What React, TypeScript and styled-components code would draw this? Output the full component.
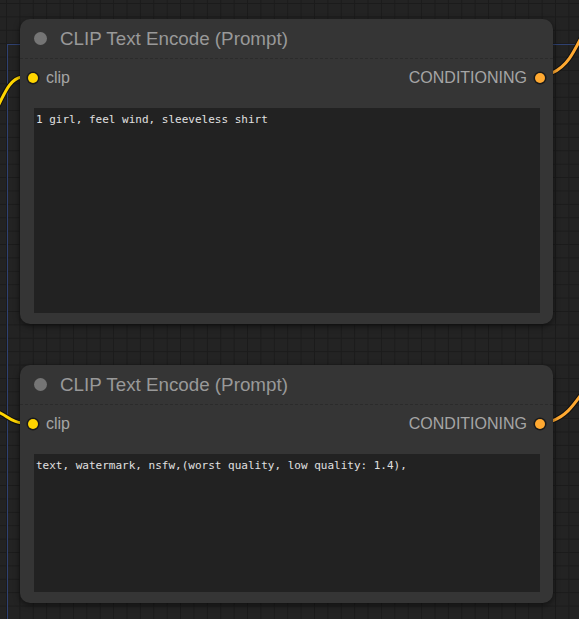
import React from "react";
import styled, { createGlobalStyle } from "styled-components";

const Global = createGlobalStyle`
  html, body { margin: 0; padding: 0; background: #202020; }
  body { font-family: "Liberation Sans", Arial, sans-serif; }
`;

const Canvas = styled.div`
  position: relative;
  width: 579px;
  height: 619px;
  overflow: hidden;
  background-color: #232323;
  background-image:
    linear-gradient(to right, #1b1b1b 1px, transparent 1px),
    linear-gradient(to bottom, #1b1b1b 1px, transparent 1px);
  background-size: 13.4px 13.4px;
  background-position: 6px 3px;
  display: flex;
  flex-direction: column;
  gap: 41px;
  padding: 19px 26px 0 20px;
  box-sizing: border-box;
`;

const Group = styled.div`
  position: absolute;
  left: 7px;
  top: 44px;
  width: 700px;
  height: 700px;
  border-left: 1px solid #2f4170;
  border-top: 1px solid #2f4170;
  pointer-events: none;
`;

const Wires = styled.svg`
  position: absolute;
  left: 0;
  top: 0;
  pointer-events: none;
`;

const Node = styled.div<{ $h: number }>`
  position: relative;
  z-index: 1;
  width: 533px;
  height: ${(p) => p.$h}px;
  background: #353535;
  border-radius: 10px;
  box-shadow: 0 2px 6px rgba(0, 0, 0, 0.55);
  display: flex;
  flex-direction: column;
  box-sizing: border-box;
  padding-bottom: 11px;
`;

const Title = styled.div`
  height: 40px;
  display: flex;
  align-items: center;
  gap: 13px;
  padding-left: 14px;
  border-bottom: 1px dashed #2b2b2b;
  box-sizing: border-box;
  color: #999;
  font-size: 18.8px;
`;

const TitleDot = styled.span`
  width: 13px;
  height: 13px;
  border-radius: 50%;
  background: #757575;
`;

const SlotRow = styled.div`
  height: 36px;
  margin-top: 1px;
  display: flex;
  align-items: center;
  justify-content: space-between;
  padding: 0 8px 0 8px;
  color: #a5a5a5;
  font-size: 16px;
`;

const Slot = styled.div`
  display: flex;
  align-items: center;
  gap: 8px;
`;

const SlotDot = styled.span<{ $c: string }>`
  width: 10px;
  height: 10px;
  border-radius: 50%;
  background: ${(p) => p.$c};
  box-shadow: 0 0 0 1.5px #1a1a1a;
`;

const TextBox = styled.div`
  flex: 1;
  margin: 12px 13px 0 14px;
  background: #222222;
  color: #e0e0e0;
  font-family: "DejaVu Sans Mono", "Liberation Mono", monospace;
  font-size: 11px;
  line-height: 14px;
  padding: 5px 2px;
  white-space: pre-wrap;
`;

const nodes = [
  { h: 305, text: "1 girl, feel wind, sleeveless shirt" },
  { h: 238, text: "text, watermark, nsfw,(worst quality, low quality: 1.4)," },
];

export default function App() {
  return (
    <>
      <Global />
      <Canvas>
        <Group />
        <Wires width="579" height="619" viewBox="0 0 579 619">
          <g fill="none" strokeLinecap="round">
            <path d="M -10 122 C 4 96, 8 79, 22 77" stroke="#111" strokeWidth="5" />
            <path d="M -10 122 C 4 96, 8 79, 22 77" stroke="#ffd500" strokeWidth="3" />
            <path d="M -10 409 C 6 413, 9 422, 22 423" stroke="#111" strokeWidth="5" />
            <path d="M -10 409 C 6 413, 9 422, 22 423" stroke="#ffd500" strokeWidth="3" />
            <path d="M 552 73 C 568 66, 574 52, 586 28" stroke="#111" strokeWidth="5" />
            <path d="M 552 73 C 568 66, 574 52, 586 28" stroke="#ffa931" strokeWidth="3" />
            <path d="M 552 421 C 568 415, 574 404, 586 388" stroke="#111" strokeWidth="5" />
            <path d="M 552 421 C 568 415, 574 404, 586 388" stroke="#ffa931" strokeWidth="3" />
          </g>
        </Wires>
        {nodes.map((n, i) => (
          <Node key={i} $h={n.h}>
            <Title>
              <TitleDot />
              <span>CLIP Text Encode (Prompt)</span>
            </Title>
            <SlotRow>
              <Slot>
                <SlotDot $c="#ffd500" />
                <span>clip</span>
              </Slot>
              <Slot>
                <span>CONDITIONING</span>
                <SlotDot $c="#ffa931" />
              </Slot>
            </SlotRow>
            <TextBox>{n.text}</TextBox>
          </Node>
        ))}
      </Canvas>
    </>
  );
}
